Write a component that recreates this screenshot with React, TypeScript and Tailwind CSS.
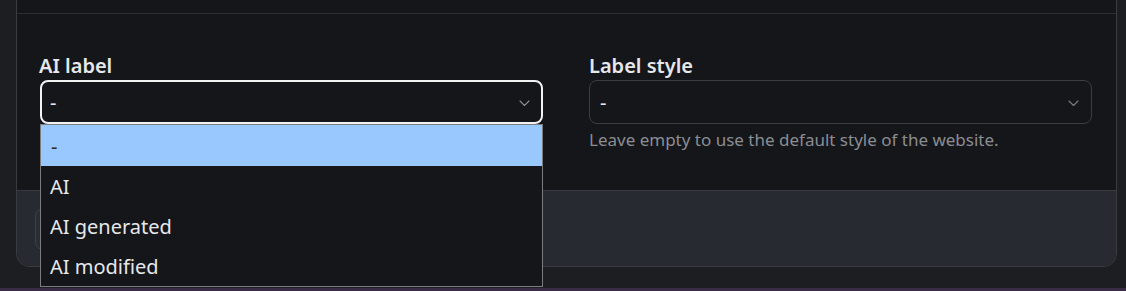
import React from "react";

const Chevron = ({ className }: { className?: string }) => (
  <svg width="11" height="7" viewBox="0 0 11 7" fill="none" className={className}>
    <path d="M1 1l4.5 4.5L10 1" stroke="currentColor" strokeWidth="1.1" strokeLinecap="round" strokeLinejoin="round" />
  </svg>
);

export default function App() {
  const font = { fontFamily: '"Noto Sans", "Open Sans", sans-serif' };
  return (
    <div className="w-[1126px] h-[291px] bg-[#1d1e22] overflow-hidden relative flex flex-col" style={font}>
      <div className="ml-[16px] mr-[9px] h-[267px] flex flex-col border-x border-b border-[#3a3b40] rounded-b-[14px] bg-[#151619]">
        <div className="h-[14px] border-b border-[#2e2f34] shrink-0" />
        <div className="h-[176px] shrink-0 pl-[23px] pr-[24px] pt-[40px] grid grid-cols-2 gap-x-[46px]">
          <div className="flex flex-col relative">
            <label className="text-[20px] font-semibold leading-[24px] text-[#e6e8eb] ml-[-1px]">AI label</label>
            <div className="mt-[2px] h-[44px] rounded-[8px] border-2 border-[#f2f2f2] flex items-center justify-between pl-[8px] pr-[11px] pt-[2px] text-[#e6e8eb] text-[20px]">
              <span>-</span>
              <Chevron className="text-[#8b8e94]" />
            </div>
            <div className="absolute left-0 right-0 top-[70px] z-10 border border-[#7b7c80] bg-[#151619] text-[20px] text-[#e6e8eb]">
              <div className="h-[41px] bg-[#99c8ff] text-[#2b2b2b] flex items-center pl-[10px] pt-[2px]">-</div>
              <div className="h-[40px] flex items-center pl-[9px] pt-[2px]">AI</div>
              <div className="h-[40px] flex items-center pl-[9px] pt-[2px]">AI generated</div>
              <div className="h-[40px] flex items-center pl-[9px] pt-[2px]">AI modified</div>
            </div>
          </div>
          <div className="flex flex-col">
            <label className="text-[20px] font-semibold leading-[24px] text-[#e6e8eb]">Label style</label>
            <div className="mt-[2px] h-[44px] rounded-[8px] border border-[#3b3d42] flex items-center justify-between pl-[10px] pr-[12px] pt-[2px] text-[#e6e8eb] text-[20px]">
              <span>-</span>
              <Chevron className="text-[#7b7e84]" />
            </div>
            <p className="mt-[5px] text-[17px] leading-[22px] text-[#8a8d93]">Leave empty to use the default style of the website.</p>
          </div>
        </div>
        <div className="flex-1 bg-[#272a31] border-t border-[#3a3b40] rounded-b-[13px] pl-[18px] pt-[17px]">
          <div className="w-[120px] h-[42px] rounded-[8px] border border-[#3d4047] bg-[#2a2d34]" />
        </div>
      </div>
      <div className="absolute bottom-0 left-0 right-0 h-[3px] bg-[#3a2b46]" />
    </div>
  );
}
